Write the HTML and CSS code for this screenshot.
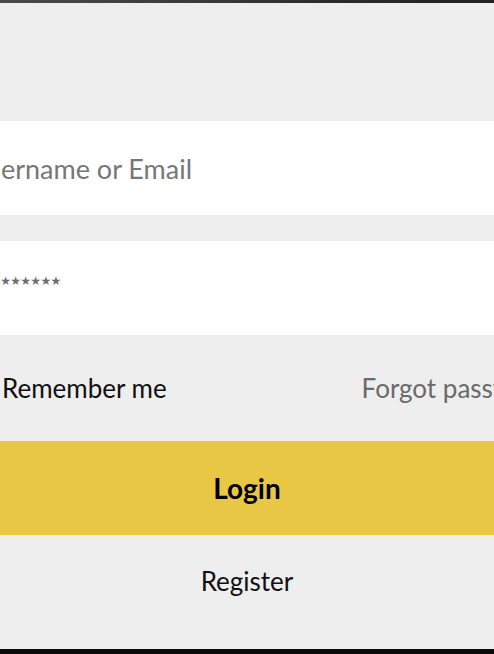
FILE: index.html
```html
<!DOCTYPE html>
<html lang="en">
<head>
<meta charset="utf-8">
<title>Login</title>
<link rel="stylesheet" href="styles.css">
</head>
<body>
<div class="topbar"></div>
<main class="stage">
  <form class="form">
    <input class="field" type="text" placeholder="Username or Email">
    <input class="field field-pass" type="password" placeholder="★★★★★★★★★">
    <div class="options">
      <label class="remember"><input class="check" type="checkbox"><span>Remember me</span></label>
      <a class="forgot" href="#">Forgot password?</a>
    </div>
    <button class="login" type="button">Login</button>
    <div class="register">Register</div>
  </form>
</main>
<div class="bottombar"></div>
</body>
</html>
```

FILE: styles.css
```css
html, body {
  margin: 0;
  padding: 0;
}
body {
  width: 494px;
  height: 654px;
  background: #eeeeee;
  display: flex;
  flex-direction: column;
  overflow: hidden;
  font-family: "Lato", "Noto Sans", sans-serif;
}
.topbar {
  height: 3px;
  flex-shrink: 0;
  background: linear-gradient(to right, #4a4a4a, #3a3a3a 40%, #2a2a2a 70%, #222 100%);
}
.stage {
  flex: 1;
  display: flex;
  justify-content: center;
  overflow: hidden;
}
.form {
  width: 594px;
  flex-shrink: 0;
  padding-top: 118px;
  display: flex;
  flex-direction: column;
}
.field {
  box-sizing: border-box;
  height: 94px;
  border: 0;
  background: #ffffff;
  padding: 0 20px;
  font-family: inherit;
  font-size: 27px;
  color: #333;
  outline: none;
}
.field::placeholder {
  color: #777777;
}
.field + .field {
  margin-top: 26px;
}
.field-pass {
  font-family: "DejaVu Sans", sans-serif;
  font-size: 12px;
  letter-spacing: -0.7px;
  padding-bottom: 14px;
}
.field-pass::placeholder {
  color: #6e6e6e;
}
.options {
  height: 106px;
  display: flex;
  align-items: center;
  justify-content: space-between;
  font-size: 26px;
}
.remember {
  display: flex;
  align-items: center;
  gap: 22px;
  color: #111;
}
.check {
  margin: 0;
  width: 30px;
  height: 30px;
}
.forgot {
  color: #6a6a6a;
  text-decoration: none;
  margin-right: -19px;
}
.login {
  height: 94px;
  border: 0;
  background: #e8c745;
  font-family: inherit;
  font-size: 28px;
  font-weight: 700;
  color: #000;
  padding: 0;
}
.register {
  flex: 1;
  padding-top: 30px;
  text-align: center;
  font-size: 26px;
  color: #111;
}
.bottombar {
  height: 5px;
  flex-shrink: 0;
  background: #0a0a0a;
}
```
